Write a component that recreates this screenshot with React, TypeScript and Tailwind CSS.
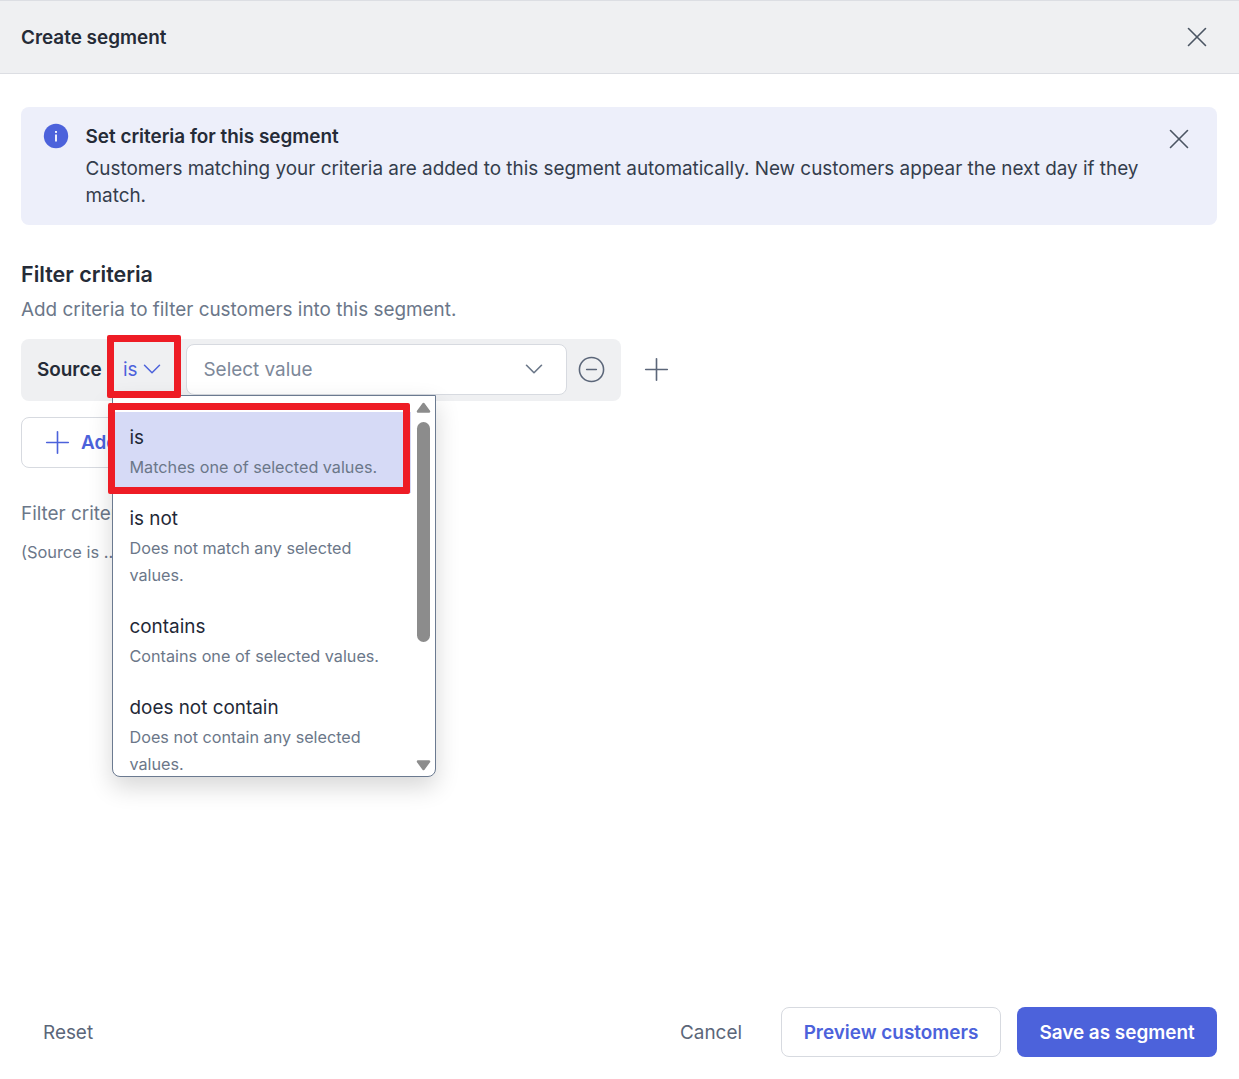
import { X, ChevronDown, Plus, CircleMinus } from "lucide-react";

const options = [
  { title: "is", desc: "Matches one of selected values.", active: true },
  { title: "is not", desc: "Does not match any selected values." },
  { title: "contains", desc: "Contains one of selected values." },
  { title: "does not contain", desc: "Does not contain any selected values." },
];

export default function App() {
  return (
    <div className="relative flex h-[1079px] w-full flex-col overflow-hidden bg-white font-['Inter',sans-serif] text-[18.9px] leading-[27px] text-[#1f2937]">
      <header className="flex h-[74px] shrink-0 items-center justify-between border-y border-[#dcdee3] bg-[#eff0f2] pl-[21px] pr-[25px]">
        <h1 className="font-semibold text-[#252b37]">Create segment</h1>
        <X size={34} strokeWidth={1.15} className="text-[#4b5563]" />
      </header>

      <main className="flex flex-1 flex-col pl-[21px] pr-[22px] pt-[33px]">
        <section className="flex h-[118px] items-start rounded-[8px] bg-[#edeffa] pl-[21.5px] pr-[20px] pt-[16px]">
          <svg width="26" height="26" viewBox="0 0 26 26" className="shrink-0">
            <circle cx="13" cy="13" r="12.2" fill="#4c62db" />
            <rect x="12.1" y="11.5" width="1.8" height="7" fill="#fff" />
            <rect x="12.1" y="8" width="1.8" height="1.9" fill="#fff" />
          </svg>
          <div className="ml-[17px] w-[1062px]">
            <p className="font-semibold text-[#252b37]">Set criteria for this segment</p>
            <p className="mt-[5px] text-[#343d4c]">
              Customers matching your criteria are added to this segment automatically. New customers appear the next day if they match.
            </p>
          </div>
          <X size={34} strokeWidth={1.15} className="ml-auto mr-[1px] mt-[-1px] text-[#4b5563]" />
        </section>

        <h2 className="mt-[35px] text-[21.5px] font-semibold leading-[28px] text-[#252b37]">Filter criteria</h2>
        <p className="mt-[8px] text-[#6b7789]">Add criteria to filter customers into this segment.</p>

        <div className="mt-[16px] flex h-[62px] w-[600px] items-center rounded-[8px] bg-[#eff0f2] pb-[2px] pl-[16px]">
          <span className="w-[65px] shrink-0 font-semibold text-[#252b37]">Source</span>
          <span className="ml-[21px] w-[15px] shrink-0 text-[#4c62db]">is</span>
          <ChevronDown size={30} strokeWidth={1.2} className="-ml-[1px] shrink-0 text-[#4c62db]" />
          <div className="ml-[19px] flex h-[51px] w-[381px] shrink-0 items-center justify-between rounded-[8px] border border-[#d7dae0] bg-white pl-[16.5px] pr-[17px]">
            <span className="text-[#7d8899]">Select value</span>
            <ChevronDown size={30} strokeWidth={1.3} className="text-[#6b7789]" />
          </div>
          <CircleMinus size={29} strokeWidth={1.3} className="ml-[10px] shrink-0 text-[#5b6679]" />
          <Plus size={37} strokeWidth={1.05} className="ml-[32px] shrink-0 text-[#5b6679]" />
        </div>

        <button className="mt-[16px] flex h-[51px] w-[200px] items-center rounded-[8px] border border-[#d7dae0] bg-white pl-[17px] font-semibold text-[#4c62db]">
          <Plus size={37} strokeWidth={1.05} className="mr-[5px]" />
          Add criteria
        </button>

        <p className="mt-[32px] text-[#6b7789]">Filter criteria summary</p>
        <p className="mt-[12px] text-[16.4px] text-[#6b7789]">(Source is ...)</p>
      </main>

      <footer className="flex h-[72px] shrink-0 items-start px-[22px]">
        <span className="ml-[21px] mt-[12px] text-[#5b6679]">Reset</span>
        <span className="ml-auto mt-[12px] text-[#5b6679]">Cancel</span>
        <button className="ml-[39px] h-[50px] w-[220px] rounded-[8px] border border-[#d7dae0] bg-white font-semibold text-[#4c62db]">
          Preview customers
        </button>
        <button className="ml-[16px] h-[50px] w-[200px] rounded-[8px] bg-[#4c62db] font-semibold text-white">
          Save as segment
        </button>
      </footer>

      <div className="absolute left-[112px] top-[395px] flex h-[382px] w-[324px] overflow-hidden rounded-b-[8px] border border-[#6b7a90] bg-white shadow-[0_10px_24px_rgba(0,0,0,0.16)]">
        <ul className="mt-[16px] w-[298px] shrink-0 overflow-hidden">
          {options.map((o) => (
            <li
              key={o.title}
              className={`pb-[12px] pl-[16.5px] pr-[12px] pt-[12px] ${o.active ? "bg-[#d6daf6]" : ""}`}
            >
              <div className="text-[#1f2937]">{o.title}</div>
              <div className="mt-[3px] text-[16.2px] text-[#6b7789]">{o.desc}</div>
            </li>
          ))}
        </ul>
        <div className="flex flex-1 flex-col items-center pt-[6px]">
          <svg width="15" height="11" viewBox="0 0 15 11"><path d="M7.5 2 13 9.5H2Z" fill="#8c8c8c" stroke="#8c8c8c" strokeWidth="2.5" strokeLinejoin="round" /></svg>
          <div className="mt-[9px] h-[220px] w-[13px] shrink-0 rounded-full bg-[#8c8c8c]" />
          <svg width="15" height="11" viewBox="0 0 15 11" className="mt-[118px]"><path d="M7.5 9 13 1.5H2Z" fill="#8c8c8c" stroke="#8c8c8c" strokeWidth="2.5" strokeLinejoin="round" /></svg>
        </div>
      </div>

      <div className="absolute left-[107px] top-[335px] h-[63px] w-[74px] rounded-[2px] border-[7px] border-[#ee1c25]" />
      <div className="absolute left-[108px] top-[403px] h-[91px] w-[302px] rounded-[2px] border-[7px] border-[#ee1c25]" />
    </div>
  );
}
